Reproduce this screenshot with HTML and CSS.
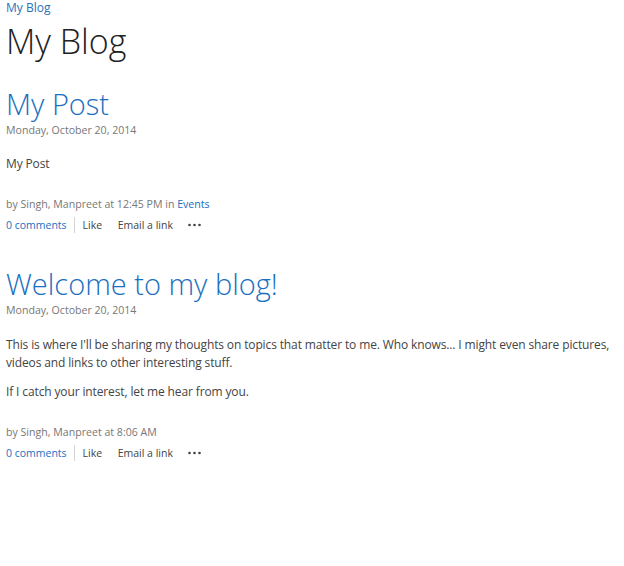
FILE: index.html
```html
<!DOCTYPE html>
<html>
<head>
<meta charset="utf-8">
<link rel="stylesheet" href="styles.css">
</head>
<body>
<div class="page">
  <a class="crumb" href="#">My Blog</a>
  <h1 class="site-title">My Blog</h1>

  <article class="post">
    <h2 class="post-title"><a href="#">My Post</a></h2>
    <div class="post-date">Monday, October 20, 2014</div>
    <div class="post-body">
      <p>My Post</p>
    </div>
    <div class="post-by">by Singh, Manpreet at 12:45 PM in <a href="#">Events</a></div>
    <div class="actions">
      <a class="comments" href="#">0 comments</a>
      <span class="sep"></span>
      <span class="act">Like</span>
      <span class="act">Email a link</span>
      <svg class="more" width="13" height="4" viewBox="0 0 13 4"><circle cx="1.5" cy="2" r="1.3"/><circle cx="6.5" cy="2" r="1.3"/><circle cx="11.5" cy="2" r="1.3"/></svg>
    </div>
  </article>

  <article class="post post2">
    <h2 class="post-title"><a href="#">Welcome to my blog!</a></h2>
    <div class="post-date">Monday, October 20, 2014</div>
    <div class="post-body">
      <p>This is where I'll be sharing my thoughts on topics that matter to me. Who knows... I might even share pictures, videos and links to other interesting stuff.</p>
      <p>If I catch your interest, let me hear from you.</p>
    </div>
    <div class="post-by">by Singh, Manpreet at 8:06 AM</div>
    <div class="actions">
      <a class="comments" href="#">0 comments</a>
      <span class="sep"></span>
      <span class="act">Like</span>
      <span class="act">Email a link</span>
      <svg class="more" width="13" height="4" viewBox="0 0 13 4"><circle cx="1.5" cy="2" r="1.3"/><circle cx="6.5" cy="2" r="1.3"/><circle cx="11.5" cy="2" r="1.3"/></svg>
    </div>
  </article>
</div>
</body>
</html>
```

FILE: styles.css
```css
html, body {
  margin: 0;
  padding: 0;
  background: #fff;
}
body {
  font-family: "Open Sans", "Noto Sans", sans-serif;
  color: #444;
}
a {
  color: #1a6fbf;
  text-decoration: none;
}
.page {
  padding: 0 2px 0 6px;
}
.crumb {
  display: block;
  font-size: 12px;
  line-height: 16px;
  color: #2b72b8;
}
.site-title {
  margin: 0;
  font-size: 34px;
  font-weight: 300;
  line-height: 50px;
  color: #222;
}
.post {
  margin-top: 20px;
}
.post2 {
  margin-top: 33px;
}
.post-title {
  margin: 0;
  font-size: 29px;
  font-weight: 300;
  line-height: 36px;
}
.post-title a {
  color: #1a6fbf;
}
.post-date {
  font-size: 10.6px;
  line-height: 17px;
  color: #777;
}
.post-body {
  font-size: 12px;
  line-height: 18px;
  letter-spacing: -0.13px;
  color: #444;
  padding-top: 16px;
}
.post2 .post-body {
  padding-top: 17px;
}
.post-body p {
  margin: 0 0 11px;
}
.post-by {
  margin-top: 23px;
  font-size: 10.6px;
  line-height: 16px;
  color: #777;
}
.actions {
  display: flex;
  align-items: center;
  font-size: 10.5px;
  line-height: 16px;
  margin-top: 5px;
}
.actions .comments {
  color: #1a6fbf;
}
.sep {
  width: 1px;
  height: 16px;
  background: #d4d4d4;
  margin: 0 8px 0 7px;
}
.act {
  color: #444;
  margin-right: 15.5px;
}
.more {
  fill: #444;
  display: block;
}
```
